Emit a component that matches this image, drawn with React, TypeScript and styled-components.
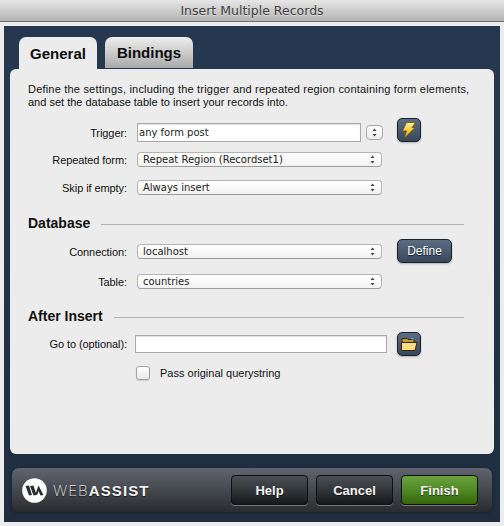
import React from "react";
import styled, { createGlobalStyle } from "styled-components";

const Global = createGlobalStyle`
  html, body { margin: 0; padding: 0; background: #ececec; }
  body { font-family: "Liberation Sans", Arial, sans-serif; }
`;

const Window = styled.div`
  width: 504px;
  height: 526px;
  overflow: hidden;
  display: flex;
  flex-direction: column;
  background: #ececec;
`;

const TitleBar = styled.div`
  box-sizing: border-box;
  height: 22px;
  border-bottom: 1px solid #6f6f6f;
  background: linear-gradient(#e6e6e6, #b4b4b4);
  display: flex;
  align-items: center;
  justify-content: center;
  font: 12.5px "DejaVu Sans", sans-serif;
  color: #3f3f3f;
  text-shadow: 0 1px 0 rgba(255, 255, 255, 0.4);
`;

const Frame = styled.div`
  box-sizing: border-box;
  width: 496px;
  height: 496px;
  margin: 4px 0 0 4px;
  background: linear-gradient(#26384f 0, #26384f 40px, #1f2d3f 100%);
  padding: 11px 6px 0;
  display: flex;
  flex-direction: column;
`;

const Tabs = styled.div`
  display: flex;
  gap: 8px;
  padding-left: 9px;
  height: 32px;
`;

const Tab = styled.div<{ $active?: boolean; $w: number }>`
  box-sizing: border-box;
  width: ${(p) => p.$w}px;
  height: ${(p) => (p.$active ? 32 : 31)}px;
  border-radius: 7px 7px 0 0;
  background: ${(p) => (p.$active ? "#ececec" : "linear-gradient(#eeeeee, #a9a9a9)")};
  display: flex;
  align-items: center;
  justify-content: center;
  font-size: 15px;
  font-weight: 700;
  color: #0d0d0d;
`;

const Panel = styled.div`
  box-sizing: border-box;
  width: 484px;
  height: 385px;
  border-radius: 6px;
  background: #ececec;
  padding: 14px 0 0 18px;
`;

const Intro = styled.p`
  margin: 0;
  width: 440px;
  font-size: 11px;
  line-height: 13px;
  color: #111;
`;

const IntroLine = styled.span<{ $spacing: number }>`
  display: block;
  white-space: nowrap;
  letter-spacing: ${(p) => p.$spacing}px;
`;

const Row = styled.div<{ $top: number; $h: number }>`
  display: flex;
  align-items: center;
  margin-top: ${(p) => p.$top}px;
  height: ${(p) => p.$h}px;
`;

const Label = styled.label`
  width: 99px;
  flex: none;
  text-align: right;
  font-size: 11px;
  letter-spacing: -0.08px;
  white-space: nowrap;
  color: #111;
  margin-right: 10px;
`;

const TextInput = styled.div<{ $w: number; $h: number; $ml?: number }>`
  box-sizing: border-box;
  width: ${(p) => p.$w}px;
  height: ${(p) => p.$h}px;
  margin-left: ${(p) => p.$ml ?? 0}px;
  background: #fff;
  border: 1px solid #a9a9a9;
  box-shadow: inset 0 1px 1px rgba(0, 0, 0, 0.12);
  padding-left: 1px;
  font: 10px/17px "DejaVu Sans", sans-serif;
  color: #222;
`;

const Select = styled.div`
  box-sizing: border-box;
  width: 245px;
  height: 15px;
  border: 1px solid #b4b4b4;
  border-bottom-color: #9c9c9c;
  border-radius: 4px;
  background: linear-gradient(#ffffff, #f2f2f2);
  display: flex;
  align-items: center;
  justify-content: space-between;
  padding: 0 6px 0 5px;
  font: 10px "DejaVu Sans", sans-serif;
  color: #222;
`;

const Updown = () => (
  <svg width="5" height="9" viewBox="0 0 5 9">
    <path d="M2.5 0.5 L4.5 3 H0.5 Z M2.5 8.5 L4.5 6 H0.5 Z" fill="#444" />
  </svg>
);

const Stepper = styled.div`
  box-sizing: border-box;
  width: 17px;
  height: 15px;
  margin-left: 5px;
  border: 1px solid #a6a6a6;
  border-radius: 4px;
  background: linear-gradient(#fff, #ededed);
  display: flex;
  align-items: center;
  justify-content: center;
`;

const IconButton = styled.div<{ $w?: number; $ml: number; $mb?: number }>`
  box-sizing: border-box;
  width: ${(p) => p.$w ?? 24}px;
  height: 24px;
  margin-left: ${(p) => p.$ml}px;
  margin-bottom: ${(p) => p.$mb ?? 0}px;
  border: 1px solid #1c222b;
  border-radius: 5px;
  background: linear-gradient(#5c6d84, #37475c);
  box-shadow: 0 1px 2px rgba(0, 0, 0, 0.25);
  display: flex;
  align-items: center;
  justify-content: center;
  font-size: 12px;
  color: #fff;
  text-shadow: 0 1px 1px rgba(0, 0, 0, 0.7);
`;

const Heading = styled.div<{ $top: number }>`
  display: flex;
  align-items: center;
  margin-top: ${(p) => p.$top}px;
  height: 16px;
  font-size: 14px;
  font-weight: 700;
  color: #111;
  width: 436px;
  &::after {
    content: "";
    flex: 1;
    height: 1px;
    margin: 2px 0 0 11px;
    background: #b2b2b2;
  }
`;

const CheckBox = styled.div`
  box-sizing: border-box;
  width: 14px;
  height: 14px;
  margin-left: 108px;
  border: 1px solid #9f9f9f;
  border-radius: 3px;
  background: linear-gradient(#ffffff, #e9e9e9);
  box-shadow: 0 1px 1px rgba(0, 0, 0, 0.15);
`;

const CheckText = styled.span`
  margin-left: 10px;
  font-size: 11px;
  color: #111;
`;

const Footer = styled.div`
  box-sizing: border-box;
  width: 480px;
  height: 44px;
  margin: 14px 0 0 2px;
  border-radius: 7px;
  background: linear-gradient(#5f6570, #45484e 50%, #2a2c2e);
  box-shadow: 0 1px 3px rgba(0, 0, 0, 0.3);
  display: flex;
  align-items: center;
  padding: 0 14px 0 10px;
`;

const Logo = styled.div`
  display: flex;
  align-items: center;
  gap: 6px;
  flex: 1;
  font-size: 15px;
  text-shadow: 0 1px 1px rgba(0, 0, 0, 0.6);
`;

const LogoLight = styled.span`
  font-family: Inter, "Liberation Sans", sans-serif;
  font-weight: 200;
  letter-spacing: 1px;
  color: #e2e2e2;
`;

const LogoBold = styled.span`
  font-weight: 700;
  letter-spacing: 1.1px;
  color: #f2f2f2;
`;

const Actions = styled.div`
  display: flex;
  gap: 8px;
`;

const ActionButton = styled.div<{ $primary?: boolean }>`
  box-sizing: border-box;
  width: 77px;
  height: 30px;
  border: 1px solid #0e0f10;
  border-radius: 4px;
  background: ${(p) =>
    p.$primary
      ? "linear-gradient(#6ba33f, #4e8a26 50%, #356508)"
      : "linear-gradient(#4a4f55, #33373a 50%, #17191a)"};
  box-shadow: 0 1px 0 rgba(255, 255, 255, 0.35);
  display: flex;
  align-items: center;
  justify-content: center;
  font-size: 13px;
  font-weight: 700;
  color: #f4f4f4;
  text-shadow: 0 1px 1px rgba(0, 0, 0, 0.6);
`;

export default function App() {
  return (
    <Window>
      <Global />
      <TitleBar>Insert Multiple Records</TitleBar>
      <Frame>
        <Tabs>
          <Tab $active $w={78}>General</Tab>
          <Tab $w={88}>Bindings</Tab>
        </Tabs>
        <Panel>
          <Intro>
            <IntroLine $spacing={0.2}>
              Define the settings, including the trigger and repeated region containing form elements,
            </IntroLine>
            <IntroLine $spacing={0}>and set the database table to insert your records into.</IntroLine>
          </Intro>
          <Row $top={12} $h={23}>
            <Label>Trigger:</Label>
            <TextInput $w={224} $h={19}>any form post</TextInput>
            <Stepper><Updown /></Stepper>
            <IconButton $ml={14} $mb={5}>
              <svg width="18" height="19" viewBox="0 0 18 19">
                <defs>
                  <linearGradient id="bolt" x1="0" y1="0" x2="0" y2="1">
                    <stop offset="0" stopColor="#fff3a0" />
                    <stop offset="0.55" stopColor="#f8c92c" />
                    <stop offset="1" stopColor="#e49a12" />
                  </linearGradient>
                </defs>
                <path d="M6.5 1.5 H15.5 L12 6.5 H15 L4 17.5 L6.5 10 H2.5 Z" fill="url(#bolt)" stroke="#7a4d08" strokeWidth="0.8" />
              </svg>
            </IconButton>
          </Row>
          <Row $top={2} $h={27}>
            <Label>Repeated form:</Label>
            <Select>Repeat Region (Recordset1)<Updown /></Select>
          </Row>
          <Row $top={1} $h={27}>
            <Label>Skip if empty:</Label>
            <Select>Always insert<Updown /></Select>
          </Row>
          <Heading $top={14}>Database</Heading>
          <Row $top={8} $h={25}>
            <Label>Connection:</Label>
            <Select>localhost<Updown /></Select>
            <IconButton $w={55} $ml={15} $mb={1}>Define</IconButton>
          </Row>
          <Row $top={4} $h={27}>
            <Label>Table:</Label>
            <Select>countries<Updown /></Select>
          </Row>
          <Heading $top={13}>After Insert</Heading>
          <Row $top={8} $h={24}>
            <Label>Go to (optional):</Label>
            <TextInput $w={252} $h={18} $ml={-2} />
            <IconButton $ml={10}>
              <svg width="18" height="15" viewBox="0 0 18 15">
                <path d="M2 3.5 V1.5 H7 L8 2.5 H14 V6 H2 Z" fill="#c7973a" stroke="#3f2507" strokeWidth="1" />
                <rect x="11" y="1" width="3" height="1.4" fill="#3db4ea" />
                <path d="M1.5 13.5 V5.5 H17 L15 13.5 Z" fill="#fbdc82" stroke="#3f2507" strokeWidth="1" />
              </svg>
            </IconButton>
          </Row>
          <Row $top={7} $h={20}>
            <CheckBox />
            <CheckText>Pass original querystring</CheckText>
          </Row>
        </Panel>
        <Footer>
          <Logo>
            <svg width="25" height="25" viewBox="0 0 25 25">
              <circle cx="12.5" cy="12.5" r="12.3" fill="#fff" />
              <path
                d="M3.5 8 L7 7.5 L10 17 L7 17.5 Z M8 8 L11.5 7.5 L14.5 17 L11.5 17.5 Z M13 17 L16.5 7.5 L21.5 17 L18.5 17.5 L16.5 13 L15.5 16.5 Z"
                fill="#2b2d30"
              />
            </svg>
            <span><LogoLight>WEB</LogoLight><LogoBold>ASSIST</LogoBold></span>
          </Logo>
          <Actions>
            <ActionButton>Help</ActionButton>
            <ActionButton>Cancel</ActionButton>
            <ActionButton $primary>Finish</ActionButton>
          </Actions>
        </Footer>
      </Frame>
    </Window>
  );
}
